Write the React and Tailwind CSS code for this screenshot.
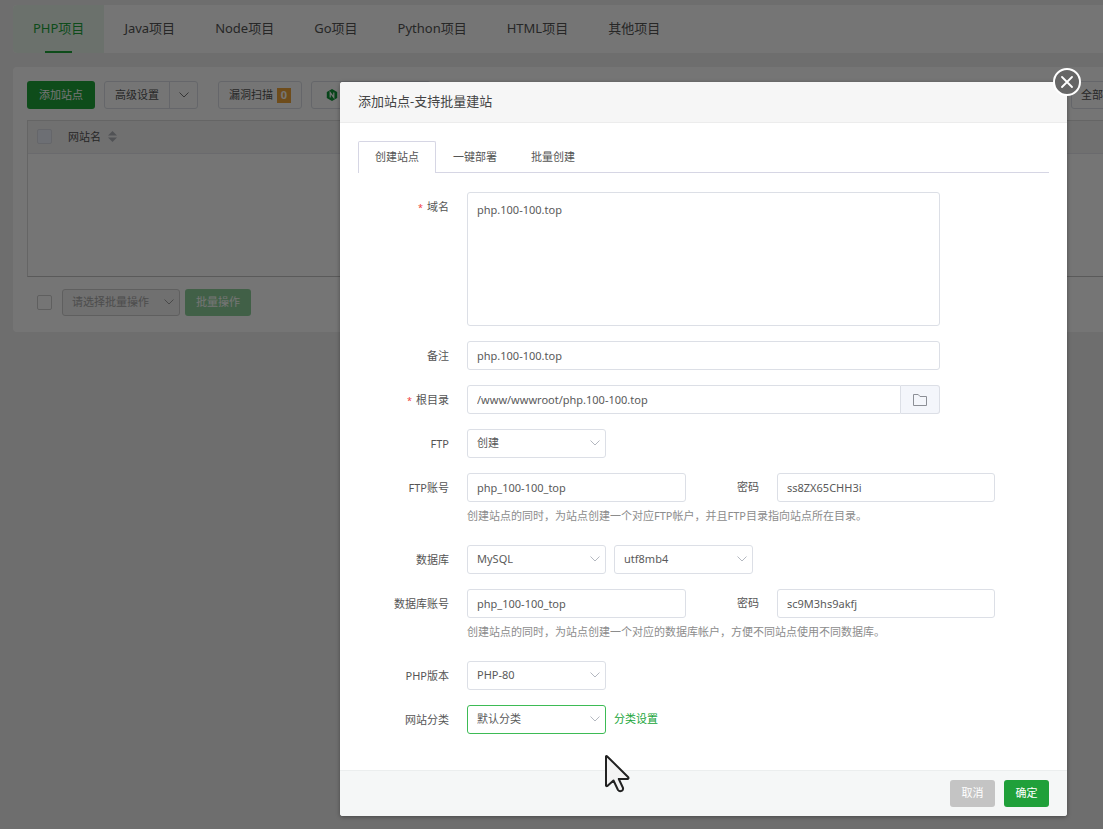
import React, { useState } from "react";

const projectTabs = ["PHP项目", "Java项目", "Node项目", "Go项目", "Python项目", "HTML项目", "其他项目"];
const modalTabs = ["创建站点", "一键部署", "批量创建"];

const inputClass =
  "h-[29px] min-w-0 rounded-[3px] border border-[#dcdfe6] bg-white px-[9px] text-[11px] text-[#5a5a5a] outline-none";

function Chevron({ className }) {
  return (
    <svg className={className} width="10" height="6" viewBox="0 0 10 6" fill="none" stroke="currentColor" strokeWidth="1">
      <path d="M0.5 0.5 L5 5 L9.5 0.5" />
    </svg>
  );
}

function Select({ id, label, options, active }) {
  return (
    <span className="relative block w-[139px] shrink-0">
      <select
        id={id}
        aria-label={label}
        className={
          "block h-[29px] w-full appearance-none rounded-[3px] border bg-white pr-6 pl-[9px] text-[11px] text-[#5a5a5a] outline-none " +
          (active ? "border-[#3dbb55]" : "border-[#dcdfe6]")
        }
      >
        {options.map((o) => (
          <option key={o}>{o}</option>
        ))}
      </select>
      <Chevron className="pointer-events-none absolute top-[11px] right-1.5 text-[#b4b8c0]" />
    </span>
  );
}

function Row({ label, htmlFor, required, hint, top, children }) {
  return (
    <div className={hint ? "" : "mb-[15px]"}>
      <div className={"flex gap-[18px] " + (top ? "items-start" : "items-center")}>
        <label htmlFor={htmlFor} className="w-[91px] shrink-0 text-right leading-[29px] whitespace-nowrap">
          {required && <span className="mr-1 text-[9px] leading-none text-[#f03c3c]">*</span>}
          {label}
        </label>
        {children}
      </div>
      {hint && <p className="mb-[15px] ml-[109px] h-7 leading-7 whitespace-nowrap text-[#8c8c8c]">{hint}</p>}
    </div>
  );
}

function Account({ id, user, password }) {
  return (
    <div className="flex items-center">
      <input id={id} className={inputClass + " w-[219px]"} defaultValue={user} />
      <label htmlFor={id + "-password"} className="mr-[18px] w-[73px] text-right">
        密码
      </label>
      <input id={id + "-password"} className={inputClass + " w-[218px]"} defaultValue={password} />
    </div>
  );
}

function SiteList() {
  return (
    <div className="min-h-screen bg-[#f0f0f0] pt-[5px] pl-[13px] text-[11px] text-[#555]">
      <nav className="flex h-12 rounded-l bg-white text-[13px]">
        {projectTabs.map((tab, i) => (
          <a
            key={tab}
            href="#"
            className={
              "relative flex items-center px-5 whitespace-nowrap " +
              (i === 0 ? "rounded-l bg-[#eaf6ec] text-[#20a53a]" : "text-[#555]")
            }
          >
            {tab}
            {i === 0 && <span className="absolute bottom-0 left-8 h-0.5 w-[27px] bg-[#20a53a]" />}
          </a>
        ))}
      </nav>

      <main className="mt-3.5 rounded-l bg-white pt-3.5 pb-4 pl-3.5">
        <div className="flex">
          <button className="h-7 rounded-[3px] bg-[#20a53a] px-3 text-white">添加站点</button>
          <div className="ml-[9px] flex h-7 rounded-[3px] border border-[#dcdfe6]">
            <button className="border-r border-[#dcdfe6] px-2.5">高级设置</button>
            <button aria-label="更多" className="flex w-[27px] items-center justify-center">
              <Chevron className="text-[#777]" />
            </button>
          </div>
          <button className="ml-5 flex h-7 items-center rounded-[3px] border border-[#dcdfe6] px-2.5">
            漏洞扫描
            <span className="ml-1 flex h-[15px] w-3.5 items-center justify-center bg-[#f0a63c] font-bold text-white">0</span>
          </button>
          <button aria-label="Nginx" className="ml-[9px] flex h-7 w-[120px] items-center rounded-[3px] border border-[#dcdfe6] pl-3.5">
            <svg width="12" height="12" viewBox="0 0 12 12">
              <path d="M6 0 L11.2 3 V9 L6 12 L0.8 9 V3 Z" fill="#109639" />
              <path d="M4.2 8.4 V3.6 L7.8 8.4 V3.6" fill="none" stroke="#fff" strokeWidth="1.2" />
            </svg>
          </button>
          <span className="flex-1" />
          <select
            aria-label="分类"
            className="-mr-[88px] h-7 w-[120px] shrink-0 appearance-none rounded-[3px] border border-[#dcdfe6] bg-white pl-[9px] text-[11px]"
          >
            <option>全部分类</option>
          </select>
        </div>

        <div className="mt-[11px] h-[157px] border border-r-0 border-[#dcdcdc] border-b-[#c4c4c4]">
          <table className="w-full border-collapse">
            <thead>
              <tr className="h-8 border-b border-[#e6e8ee] bg-[#f3f3f4] text-left">
                <th className="w-10 pl-[9px] font-normal">
                  <input
                    type="checkbox"
                    aria-label="全选"
                    className="block size-[15px] appearance-none rounded-[2px] border border-[#dcdfe6] bg-[#edf2fc]"
                  />
                </th>
                <th className="font-normal">
                  <span className="flex items-center gap-[7px]">
                    网站名
                    <svg width="9" height="11" viewBox="0 0 9 11" fill="#b0b3ba">
                      <path d="M4.5 0 L9 4.5 H0 Z" />
                      <path d="M4.5 11 L9 6.5 H0 Z" />
                    </svg>
                  </span>
                </th>
              </tr>
            </thead>
          </table>
        </div>

        <div className="mt-3 flex items-center pl-2.5">
          <input
            type="checkbox"
            aria-label="选择全部站点"
            className="size-[15px] appearance-none rounded-[2px] border border-[#cfcfcf] bg-white"
          />
          <span className="relative ml-2.5 block w-[118px]">
            <select
              aria-label="批量操作"
              disabled
              className="block h-[27px] w-full appearance-none rounded-[3px] border border-[#cfcfcf] bg-[#f3f3f3] pl-[9px] text-[11px] text-[#a8a8a8] opacity-100"
            >
              <option>请选择批量操作</option>
            </select>
            <Chevron className="pointer-events-none absolute top-2.5 right-1.5 text-[#a0a0a0]" />
          </span>
          <button disabled className="ml-[5px] h-[27px] rounded-[3px] bg-[#8fd29c] px-[11px] text-white">
            批量操作
          </button>
        </div>
      </main>
    </div>
  );
}

function AddSiteModal() {
  const [tab, setTab] = useState(0);
  return (
    <section
      role="dialog"
      aria-label="添加站点"
      className="relative min-w-0 flex-1 rounded-[3px] bg-white text-[11px] text-[#555] shadow-[0_1px_4px_rgba(0,0,0,0.35)]"
    >
      <button
        aria-label="关闭"
        className="absolute -top-3.5 -right-3.5 flex size-7 items-center justify-center rounded-full border-2 border-white bg-[#666]"
      >
        <svg width="12" height="12" viewBox="0 0 12 12" fill="none" stroke="#fff" strokeWidth="1.8" strokeLinecap="round">
          <path d="M1 1 L11 11 M11 1 L1 11" />
        </svg>
      </button>

      <header className="flex h-[41px] items-center rounded-t-[3px] border-b border-[#ececec] bg-[#f6f6f6] px-[18px]">
        <h1 className="text-[13px] text-[#444]">添加站点-支持批量建站</h1>
      </header>

      <div className="px-[18px] pt-[18px] pb-[21px]">
        <div role="tablist" className="flex h-8 border-b border-[#d6d6e4]">
          {modalTabs.map((name, i) => (
            <button
              key={name}
              role="tab"
              aria-selected={tab === i}
              onClick={() => setTab(i)}
              className={
                "h-8 rounded-t-[2px] border border-b-0 px-4 " +
                (tab === i ? "border-[#d6d6e4] bg-white" : "border-transparent")
              }
            >
              {name}
            </button>
          ))}
        </div>

        <form className="mt-[19px]" onSubmit={(e) => e.preventDefault()}>
          <Row label="域名" htmlFor="domain" required top>
            <textarea
              id="domain"
              className="block h-[134px] w-[473px] resize-none rounded-[3px] border border-[#dcdfe6] px-[9px] py-[7px] leading-5 text-[#5a5a5a] outline-none"
              defaultValue="php.100-100.top"
            />
          </Row>
          <Row label="备注" htmlFor="remark">
            <input id="remark" className={inputClass + " w-[473px]"} defaultValue="php.100-100.top" />
          </Row>
          <Row label="根目录" htmlFor="root-path" required>
            <div className="flex w-[473px]">
              <input
                id="root-path"
                className="h-[29px] min-w-0 flex-1 rounded-l-[3px] border border-[#dcdfe6] px-[9px] text-[#5a5a5a] outline-none"
                defaultValue="/www/wwwroot/php.100-100.top"
              />
              <button
                type="button"
                aria-label="选择目录"
                className="flex w-[39px] items-center justify-center rounded-r-[3px] border border-l-0 border-[#dcdfe6] bg-[#f4f6fb]"
              >
                <svg width="14" height="12" viewBox="0 0 14 12" fill="none" stroke="#8c8f96" strokeWidth="1">
                  <path d="M0.5 0.5 H5.2 L7 2.5 H13.5 V11.5 H0.5 Z" />
                </svg>
              </button>
            </div>
          </Row>
          <Row label="FTP" htmlFor="ftp">
            <Select id="ftp" options={["创建", "不创建"]} />
          </Row>
          <Row
            label="FTP账号"
            htmlFor="ftp-account"
            hint="创建站点的同时，为站点创建一个对应FTP帐户，并且FTP目录指向站点所在目录。"
          >
            <Account id="ftp-account" user="php_100-100_top" password="ss8ZX65CHH3i" />
          </Row>
          <Row label="数据库" htmlFor="database">
            <div className="flex gap-2">
              <Select id="database" options={["MySQL", "不创建"]} />
              <Select label="字符集" options={["utf8mb4", "utf8", "gbk"]} />
            </div>
          </Row>
          <Row
            label="数据库账号"
            htmlFor="database-account"
            hint="创建站点的同时，为站点创建一个对应的数据库帐户，方便不同站点使用不同数据库。"
          >
            <Account id="database-account" user="php_100-100_top" password="sc9M3hs9akfj" />
          </Row>
          <Row label="PHP版本" htmlFor="php-version">
            <Select id="php-version" options={["PHP-80", "PHP-74"]} />
          </Row>
          <Row label="网站分类" htmlFor="category">
            <div className="flex items-center gap-2">
              <Select id="category" options={["默认分类"]} active />
              <a href="#" className="text-[#20a53a]">
                分类设置
              </a>
            </div>
          </Row>
        </form>
      </div>

      <footer className="flex h-[46px] items-center justify-end gap-[9px] rounded-b-[3px] border-t border-[#ebeeee] bg-[#f5f7f7] px-[18px]">
        <button className="h-[27px] w-[45px] rounded-[3px] bg-[#c4c4c4] text-white">取消</button>
        <button className="h-[27px] w-[45px] rounded-[3px] bg-[#20a03a] text-white">确定</button>
      </footer>
    </section>
  );
}

export default function App() {
  return (
    <div className="relative min-h-screen overflow-hidden font-['Noto_Sans','Noto_Sans_CJK_SC',sans-serif]">
      <SiteList />
      <div className="absolute inset-0 flex items-start bg-black/54 pt-[82px] pr-9 pl-[340px]">
        <AddSiteModal />
      </div>
      <svg
        className="pointer-events-none absolute top-[754px] left-[604px]"
        width="28"
        height="40"
        viewBox="0 0 28 40"
        fill="#f4f4f4"
        stroke="#222"
        strokeWidth="2"
        strokeLinejoin="round"
      >
        <path d="M2 2.5 V31.5 Q2.3 32.6 3.6 31.8 L9.5 26.5 L14 36 Q15.6 38 18 36.6 Q19.6 35.4 18.8 33.5 L14.8 25 H23.5 Q25.2 24.4 24 23 L3 2.2 Q2.2 1.6 2 2.5 Z" />
      </svg>
    </div>
  );
}
